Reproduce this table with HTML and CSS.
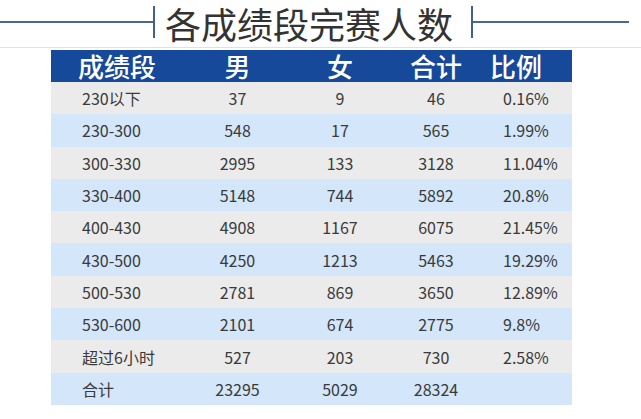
FILE: index.html
```html
<!DOCTYPE html>
<html lang="zh">
<head>
<meta charset="utf-8">
<link rel="stylesheet" href="styles.css">
</head>
<body>
<div class="title-bar">
  <span class="rule rule-left"></span>
  <span class="tick"></span>
  <h1 class="title">各成绩段完赛人数</h1>
  <span class="tick"></span>
  <span class="rule rule-right"></span>
</div>
<div class="underline"></div>
<div class="table">
  <div class="row head">
    <div class="c1">成绩段</div><div class="c2">男</div><div class="c3">女</div><div class="c4">合计</div><div class="c5">比例</div>
  </div>
  <div class="row gray"><div class="c1">230以下</div><div class="c2">37</div><div class="c3">9</div><div class="c4">46</div><div class="c5">0.16%</div></div>
  <div class="row blue"><div class="c1">230-300</div><div class="c2">548</div><div class="c3">17</div><div class="c4">565</div><div class="c5">1.99%</div></div>
  <div class="row gray"><div class="c1">300-330</div><div class="c2">2995</div><div class="c3">133</div><div class="c4">3128</div><div class="c5">11.04%</div></div>
  <div class="row blue"><div class="c1">330-400</div><div class="c2">5148</div><div class="c3">744</div><div class="c4">5892</div><div class="c5">20.8%</div></div>
  <div class="row gray"><div class="c1">400-430</div><div class="c2">4908</div><div class="c3">1167</div><div class="c4">6075</div><div class="c5">21.45%</div></div>
  <div class="row blue"><div class="c1">430-500</div><div class="c2">4250</div><div class="c3">1213</div><div class="c4">5463</div><div class="c5">19.29%</div></div>
  <div class="row gray"><div class="c1">500-530</div><div class="c2">2781</div><div class="c3">869</div><div class="c4">3650</div><div class="c5">12.89%</div></div>
  <div class="row blue"><div class="c1">530-600</div><div class="c2">2101</div><div class="c3">674</div><div class="c4">2775</div><div class="c5">9.8%</div></div>
  <div class="row gray"><div class="c1">超过6小时</div><div class="c2">527</div><div class="c3">203</div><div class="c4">730</div><div class="c5">2.58%</div></div>
  <div class="row blue"><div class="c1">合计</div><div class="c2">23295</div><div class="c3">5029</div><div class="c4">28324</div><div class="c5"></div></div>
</div>
</body>
</html>
```
FILE: styles.css
```css
html, body {
  margin: 0;
  padding: 0;
  background: #ffffff;
}
body {
  width: 641px;
  height: 419px;
  overflow: hidden;
  font-family: "Noto Sans CJK SC", "Noto Sans", sans-serif;
  color: #3a3a3a;
}
.title-bar {
  display: flex;
  align-items: flex-start;
  height: 47px;
}
.rule {
  flex: none;
  height: 2px;
  margin-top: 21px;
  background: #4a6796;
}
.rule-left { width: 153px; }
.rule-right { width: 156px; }
.tick {
  flex: none;
  width: 2px;
  height: 32px;
  margin-top: 6px;
  background: #3f5f95;
}
.title {
  flex: none;
  margin: 0 18px 0 10px;
  font-size: 36px;
  font-weight: 400;
  line-height: 47px;
  color: #333333;
  white-space: nowrap;
}
.underline {
  height: 1px;
  background: #d6e3f0;
}
.table {
  margin: 2px 0 0 51px;
  width: 521px;
}
.row {
  display: grid;
  grid-template-columns: 139px 95px 110px 82px 95px;
  height: 32.3px;
  align-items: center;
  font-size: 16px;
  line-height: 20px;
}
.row > div { text-align: center; white-space: nowrap; }
.row > .c1 { text-align: left; padding-left: 31px; }
.row > .c5 { text-align: left; padding-left: 26px; }
.head {
  height: 32px;
  background: #17499a;
  color: #ffffff;
  font-size: 26px;
  font-weight: 500;
  line-height: 30px;
}
.head > .c1 { padding-left: 27px; }
.head > .c5 { padding-left: 13px; }
.gray { background: #ebebeb; }
.blue { background: #d4e6f9; }
```
